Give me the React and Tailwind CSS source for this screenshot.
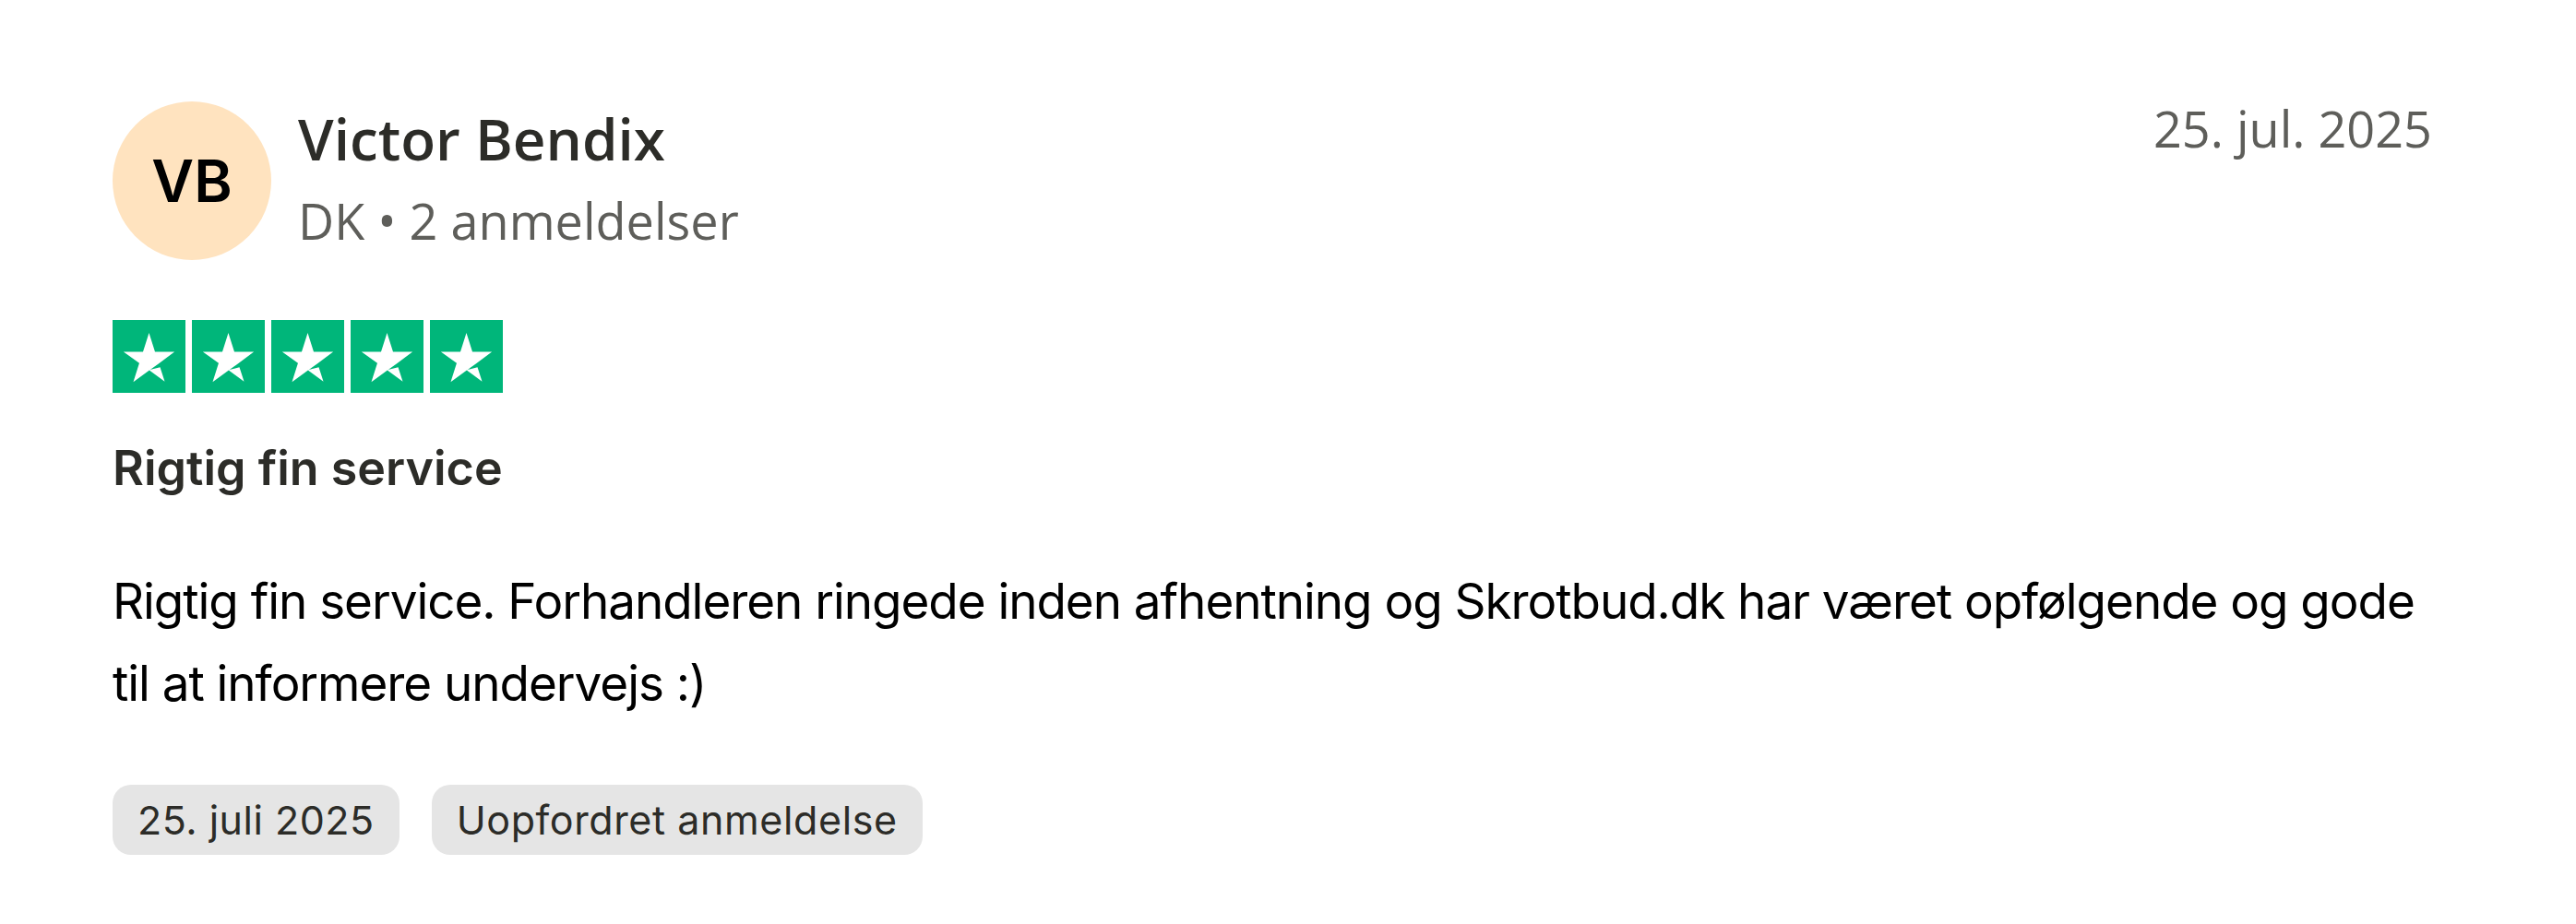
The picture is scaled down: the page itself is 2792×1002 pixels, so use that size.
import React from "react";

const STAR =
  "M12 16.5l3.65-.925L17.175 20.25 12 16.5zm8.4-6.05h-6.425L12 4.25l-1.975 6.2H3.6l5.2 3.75-1.975 6.2 5.2-3.75 3.2-2.3L20.4 10.45z";

function Star() {
  return (
    <div className="w-[79px] h-[79px] bg-[#00b67a]">
      <svg viewBox="0 0 24 24" className="w-full h-full">
        <path d={STAR} fill="#ffffff" />
      </svg>
    </div>
  );
}

export default function App() {
  const sans = { fontFamily: '"Open Sans", "Noto Sans", sans-serif' };
  const inter = { fontFamily: 'Inter, "Liberation Sans", sans-serif' };
  return (
    <div className="w-[2792px] h-[1002px] bg-white px-[122px] pt-[110px]">
      <div className="flex justify-between items-start">
        <div className="flex items-start gap-[29px]">
          <div
            className="w-[172px] h-[172px] rounded-full bg-[#ffe3bf] flex items-center justify-center text-[63px] font-semibold text-black"
            style={inter}
          >
            VB
          </div>
          <div className="flex flex-col pt-[2px]" style={sans}>
            <div className="text-[62px] leading-[76px] font-semibold text-[#2c2c28]">
              Victor Bendix
            </div>
            <div className="mt-[16px] text-[54px] leading-[70px] text-[#5e5e5a]">
              DK • 2 anmeldelser
            </div>
          </div>
        </div>
        <div
          className="mt-[-6px] mr-[34px] text-[54px] leading-[70px] text-[#5e5e5a]"
          style={sans}
        >
          25. jul. 2025
        </div>
      </div>

      <div className="mt-[65px] flex gap-[7px]">
        <Star />
        <Star />
        <Star />
        <Star />
        <Star />
      </div>

      <div style={inter}>
        <h2 className="mt-[50px] text-[52px] leading-[64px] font-semibold text-[#2c2c28]">
          Rigtig fin service
        </h2>
        <p className="mt-[68px] text-[53px] leading-[89px] tracking-[-1.05px] text-black">
          Rigtig fin service. Forhandleren ringede inden afhentning og Skrotbud.dk har været
          opfølgende og gode til at informere undervejs :)
        </p>
        <div className="mt-[65px] flex gap-[35px]">
          <div className="h-[76px] px-[27px] flex items-center rounded-[20px] bg-[#e5e5e5] text-[43px] tracking-[0.5px] text-[#2c2c28]">
            25. juli 2025
          </div>
          <div className="h-[76px] px-[27px] flex items-center rounded-[20px] bg-[#e5e5e5] text-[43px] tracking-[0.6px] text-[#2c2c28]">
            Uopfordret anmeldelse
          </div>
        </div>
      </div>
    </div>
  );
}
